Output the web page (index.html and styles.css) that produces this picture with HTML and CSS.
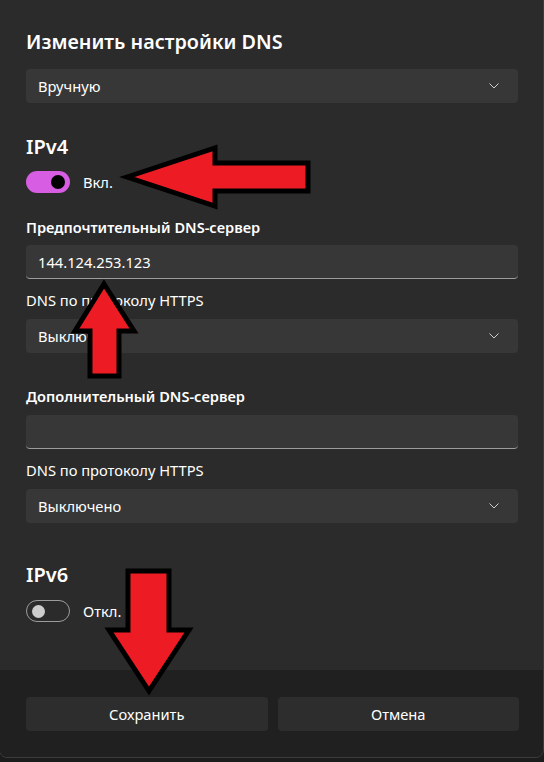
FILE: index.html
```html
<!DOCTYPE html>
<html lang="ru">
<head>
<meta charset="utf-8">
<link rel="stylesheet" href="styles.css">
</head>
<body>
<div class="dialog">
  <div class="content">
    <h1 class="title">Изменить настройки DNS</h1>
    <div class="select mt13"><span>Вручную</span><svg class="chev" width="10" height="6" viewBox="0 0 10 6"><path d="M0.5 0.5 L5 5 L9.5 0.5" fill="none" stroke="#cfcfcf" stroke-width="1"/></svg></div>

    <h2 class="heading mt30">IPv4</h2>
    <div class="toggle-row mt10"><span class="toggle on"><span class="knob"></span></span><span class="toggle-label">Вкл.</span></div>

    <div class="label strong mt24">Предпочтительный DNS-сервер</div>
    <div class="input mt8">144.124.253.123</div>
    <div class="label mt11">DNS по протоколу HTTPS</div>
    <div class="select mt9"><span>Выключено</span><svg class="chev" width="10" height="6" viewBox="0 0 10 6"><path d="M0.5 0.5 L5 5 L9.5 0.5" fill="none" stroke="#cfcfcf" stroke-width="1"/></svg></div>

    <div class="label strong mt33">Дополнительный DNS-сервер</div>
    <div class="input mt9"></div>
    <div class="label mt11">DNS по протоколу HTTPS</div>
    <div class="select mt9"><span>Выключено</span><svg class="chev" width="10" height="6" viewBox="0 0 10 6"><path d="M0.5 0.5 L5 5 L9.5 0.5" fill="none" stroke="#cfcfcf" stroke-width="1"/></svg></div>

    <h2 class="heading mt38">IPv6</h2>
    <div class="toggle-row mt11"><span class="toggle off"><span class="knob"></span></span><span class="toggle-label">Откл.</span></div>
  </div>
  <div class="footer">
    <button class="btn">Сохранить</button>
    <button class="btn">Отмена</button>
  </div>
</div>
<svg class="arrows" width="544" height="762" viewBox="0 0 544 762">
  <g fill="#ed1c24" stroke="#000" stroke-width="5" stroke-linejoin="miter" stroke-miterlimit="10">
    <polygon points="127,177 215,148 215,163 308,163 308,191 215,191 215,206"/>
    <polygon points="104,284 134,331 119,331 119,376 90,376 90,331 75,331"/>
    <polygon points="128,571 169,571 169,630 189,630 149,691 109,630 128,630"/>
  </g>
</svg>
</body>
</html>
```

FILE: styles.css
```css
* { box-sizing: border-box; }
html, body { margin: 0; padding: 0; }
body {
  width: 544px;
  height: 762px;
  background: #1c1c1c;
  font-family: "Noto Sans", "Segoe UI", sans-serif;
  color: #ffffff;
  position: relative;
  overflow: hidden;
}
.dialog {
  margin-left: -1px;
  margin-top: -10px;
  width: 545px;
  height: 768px;
  background: #2b2b2b;
  border: 1px solid #3c3c3c;
  border-radius: 8px;
  display: flex;
  flex-direction: column;
  overflow: hidden;
}
.content {
  flex: 1;
  padding: 37px 25px 0 26px;
}
.title {
  margin: 0;
  font-size: 19.8px;
  font-weight: 600;
  line-height: 28px;
}
.heading {
  margin: 0;
  font-size: 20px;
  font-weight: 600;
  line-height: 28px;
}
.select, .input {
  height: 34px;
  border-radius: 4px;
  background: #373737;
  display: flex;
  align-items: center;
  padding: 0 16px 0 12px;
  font-size: 14.7px;
}
.select { justify-content: space-between; }
.input {
  border-bottom: 1px solid #9c9c9c;
  padding-top: 1px;
}
.chev { display: block; margin-right: 3px; }
.label {
  font-size: 14.7px;
  line-height: 20px;
}
.strong { font-weight: 600; font-size: 14.6px; }
.toggle-row {
  display: flex;
  align-items: center;
  height: 22px;
}
.toggle {
  width: 44px;
  height: 22px;
  border-radius: 11px;
  display: flex;
  align-items: center;
  position: relative;
}
.toggle.on {
  background: #d75de2;
  justify-content: flex-end;
  padding-right: 5px;
}
.toggle.on .knob {
  width: 14px;
  height: 14px;
  border-radius: 50%;
  background: #000;
}
.toggle.off {
  border: 1px solid #9c9c9c;
  padding-left: 5px;
}
.toggle.off .knob {
  width: 13px;
  height: 13px;
  border-radius: 50%;
  background: #cdcdcd;
}
.toggle-label {
  margin-left: 13px;
  font-size: 14.7px;
}
.mt8 { margin-top: 8px; }
.mt9 { margin-top: 9px; }
.mt10 { margin-top: 10px; }
.mt11 { margin-top: 11px; }
.mt13 { margin-top: 13px; }
.mt24 { margin-top: 24px; }
.mt30 { margin-top: 30px; }
.mt33 { margin-top: 33px; }
.mt38 { margin-top: 38px; }
.footer {
  height: 87px;
  background: #202020;
  display: flex;
  gap: 10px;
  padding: 27px 24px 0 26px;
}
.btn {
  flex: 1;
  height: 34px;
  background: #2d2d2d;
  border: none;
  border-radius: 4px;
  color: #fff;
  font-family: inherit;
  font-size: 14.7px;
}
.arrows {
  position: absolute;
  left: 0;
  top: 0;
}
```
